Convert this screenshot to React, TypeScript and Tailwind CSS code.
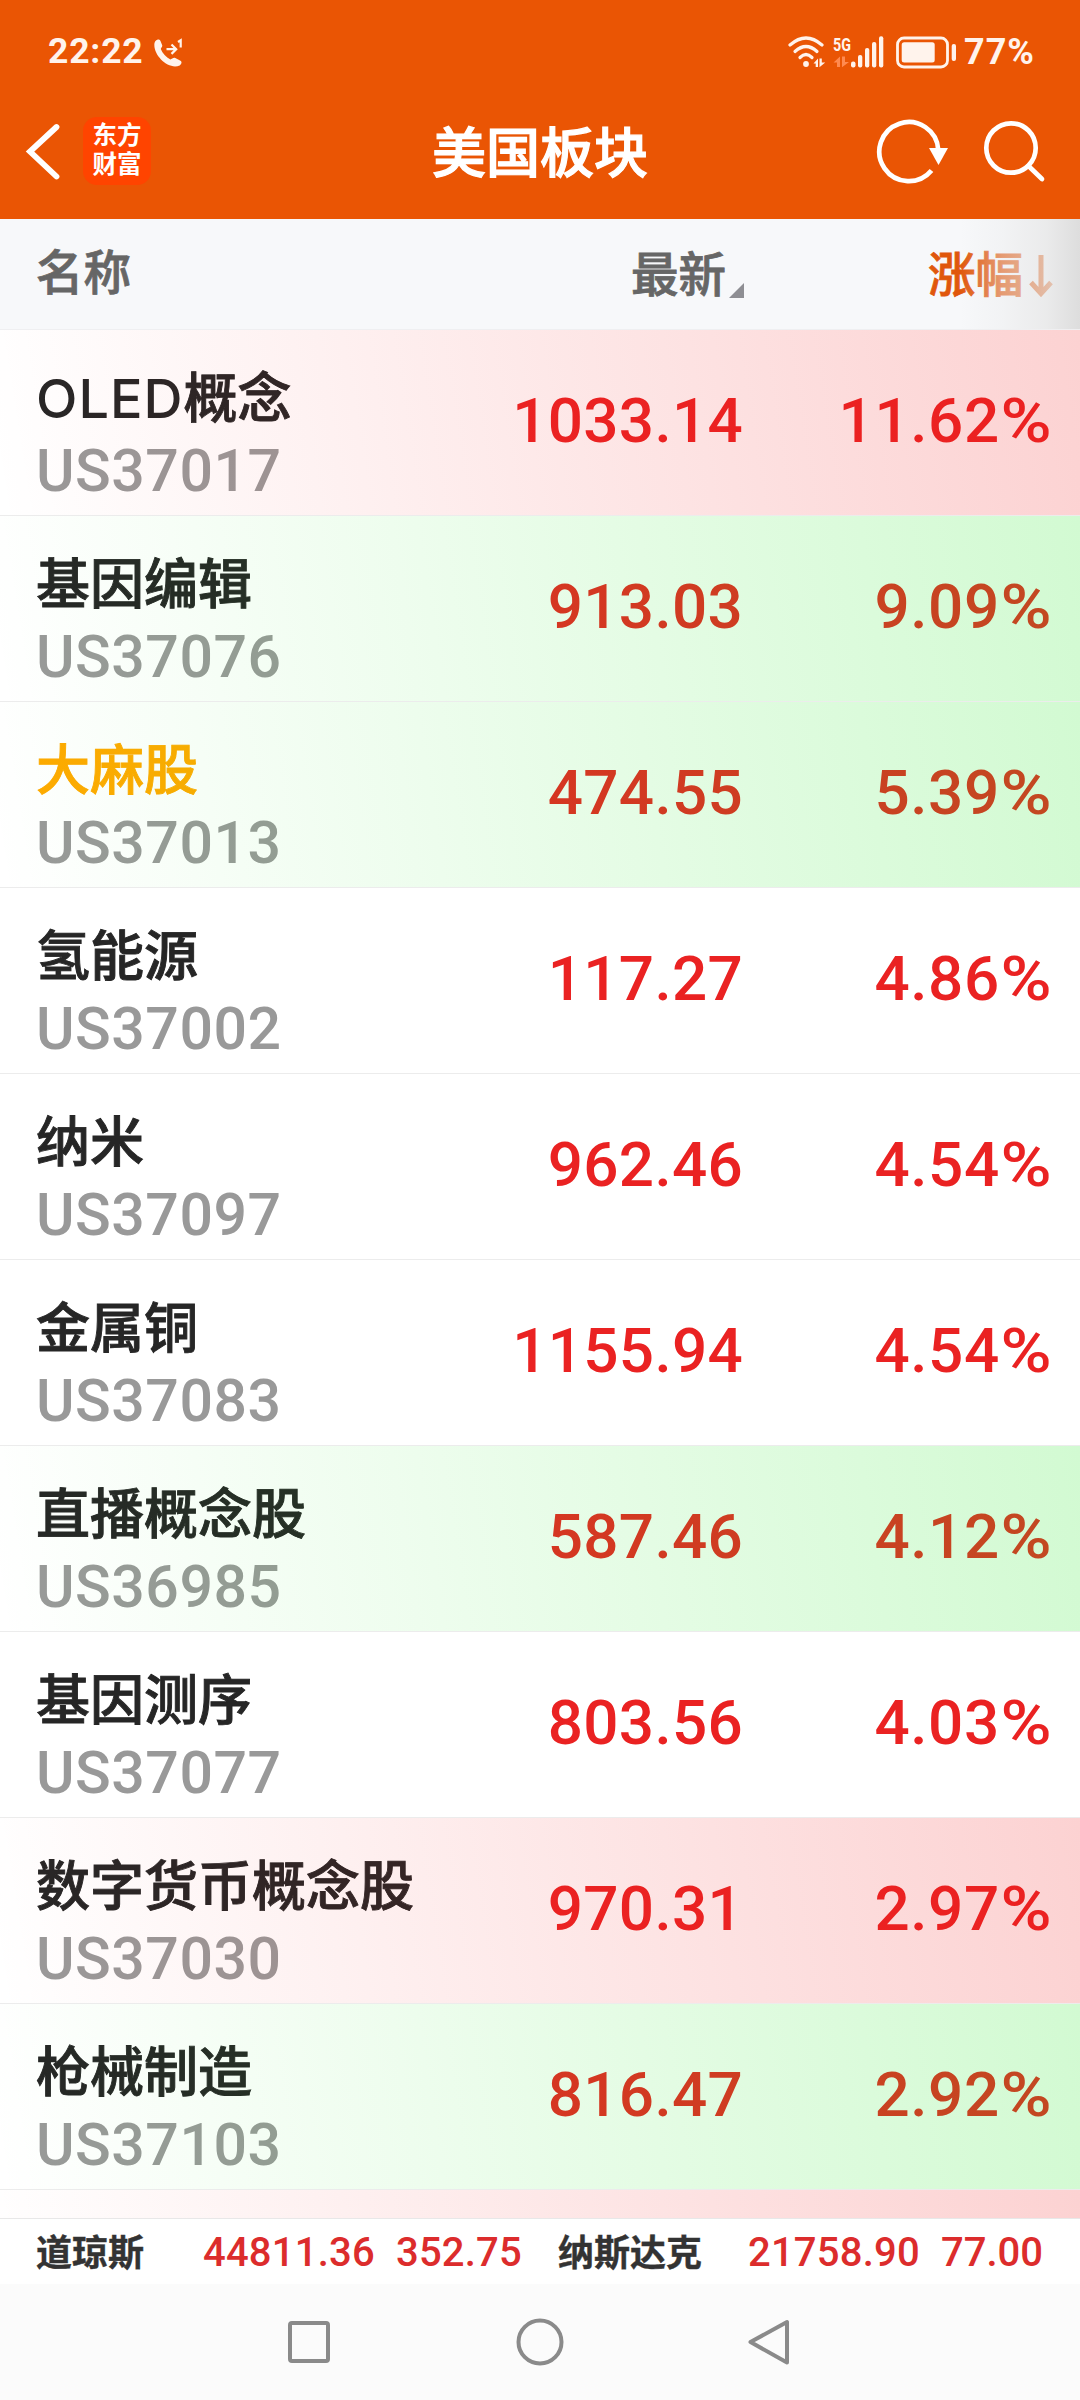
type Flash = 'up' | 'down';

interface Sector {
  latin?: string;
  name: string;
  code: string;
  price: string;
  change: string;
  flash?: Flash;
  starred?: boolean;
}

const SECTORS: Sector[] = [
  { latin: 'OLED', name: '概念', code: 'US37017', price: '1033.14', change: '11.62', flash: 'up' },
  { name: '基因编辑', code: 'US37076', price: '913.03', change: '9.09', flash: 'down' },
  { name: '大麻股', code: 'US37013', price: '474.55', change: '5.39', flash: 'down', starred: true },
  { name: '氢能源', code: 'US37002', price: '117.27', change: '4.86' },
  { name: '纳米', code: 'US37097', price: '962.46', change: '4.54' },
  { name: '金属铜', code: 'US37083', price: '1155.94', change: '4.54' },
  { name: '直播概念股', code: 'US36985', price: '587.46', change: '4.12', flash: 'down' },
  { name: '基因测序', code: 'US37077', price: '803.56', change: '4.03' },
  { name: '数字货币概念股', code: 'US37030', price: '970.31', change: '2.97', flash: 'up' },
  { name: '枪械制造', code: 'US37103', price: '816.47', change: '2.92', flash: 'down' },
];

// The tint sits over the text too, so the digits pick up some of its colour.
const FLASH_CLASS: Record<Flash, string> = {
  up: 'bg-[linear-gradient(81deg,rgba(240,30,30,0),rgba(240,30,30,0.2))]',
  down: 'bg-[linear-gradient(81deg,rgba(30,230,30,0),rgba(30,230,30,0.2))]',
};

function StatusBar() {
  return (
    <div className="flex h-[104px] items-center justify-between pl-[48px] pr-[42px] font-[Roboto] text-[#fff3ec]">
      <div className="flex items-center">
        <span className="w-[105px] text-[35.5px] font-bold leading-none tracking-[0.8px]">22:22</span>
        <svg width="32" height="32" viewBox="0 0 32 32" className="mt-[4px]">
          <path
            d="M1.500 5C2.500 1.500 6 .5 7.500 3l1.700 4.300c.4 1.500-.9 2.400-1.400 3.700 1.800 4.500 5.200 8.200 9.600 10.400 1.500-.4 3.200-2.300 4.900-1.300l5.200 2.600c1.800 1.200 1 3.600-.8 4.800C15.500 32.500-.5 17 1.500 5Z"
            fill="currentColor"
          />
          <path d="M13.500 11.200h9.500M18.500 6.500l4.700 4.700-4.700 4.700" fill="none" stroke="currentColor" strokeWidth="2.200" />
          <path d="M25 4l2.700-1.800v7.300" fill="none" stroke="currentColor" strokeWidth="2.200" />
        </svg>
      </div>
      <div className="flex items-center">
        <svg width="170" height="44" viewBox="788 30 170 44" className="mr-[6px]">
          <g fill="none" stroke="currentColor" strokeWidth="3.200" strokeLinecap="round">
            <path d="M790 45Q806 31 822 45" />
            <path d="M795 51.500Q806 41.500 817 51.500" />
            <path d="M800 57.500Q806 51.500 812 57.500" />
          </g>
          <circle cx="806" cy="64" r="2.900" fill="currentColor" />
          <path d="M813.500 63.500l4.500-5v8.500h-2.300v-3.500zM819.500 58.500h2.300v4h3.400l-5.700 4.800z" fill="currentColor" />
          <text
            x="833"
            y="50.500"
            fontSize="18.500"
            fontWeight="700"
            textLength="18"
            lengthAdjust="spacingAndGlyphs"
            fill="currentColor"
          >
            5G
          </text>
          <path d="M833.500 62.500l6.500-6v10.500h-3v-4.500zM842 56.500h3v5.500h4l-7 5.300z" fill="#ff8a50" />
          <g fill="currentColor">
            <rect x="851" y="61.500" width="4.500" height="6" rx="2" />
            <rect x="858" y="55" width="4.300" height="12.500" rx="2" />
            <rect x="865" y="48" width="4.300" height="19.500" rx="2" />
            <rect x="872" y="42" width="4.300" height="25.500" rx="2" />
            <rect x="879" y="36.300" width="4.300" height="31.200" rx="2" />
          </g>
          <rect x="897.500" y="38" width="50" height="29" rx="6.500" fill="none" stroke="currentColor" strokeWidth="2.800" />
          <rect x="901.700" y="42.300" width="33" height="20.200" rx="2.500" fill="currentColor" />
          <rect x="951.700" y="44" width="4.300" height="17" rx="2" fill="currentColor" />
        </svg>
        <span className="w-[74px] whitespace-nowrap text-[36px] font-bold leading-none tracking-[1px]">77%</span>
      </div>
    </div>
  );
}

function TitleBar() {
  return (
    <div className="flex h-[115px] items-start justify-between text-white">
      <div className="flex w-[360px] items-center pl-[24px] pt-[13px]">
        <svg width="40" height="68" viewBox="24 117 40 68">
          <path d="M56.500 127L30 151.500 56.500 176.500" fill="none" stroke="currentColor" strokeWidth="5.800" strokeLinecap="round" />
        </svg>
        <div className="ml-[19px] flex h-[68px] w-[68px] flex-col items-center justify-center rounded-[14px] bg-[#ff4400] pb-[2px] text-[24.5px] font-bold leading-[29px]">
          <span>东方</span>
          <span>财富</span>
        </div>
      </div>
      <h1 className="pt-[15px] text-[54px] font-medium leading-[70px] [-webkit-text-stroke:1.2px]">美国板块</h1>
      <div className="flex w-[360px] justify-end pr-[34px] pt-[11px]">
        <svg width="172" height="70" viewBox="874 115 172 70">
          <path
            d="M931.500 170.500A29.500 29.500 0 1 1 938.300 150"
            fill="none"
            stroke="currentColor"
            strokeWidth="4.700"
          />
          <path d="M929 148h19l-9.500 17z" fill="currentColor" />
          <circle cx="1011" cy="148" r="24.700" fill="none" stroke="currentColor" strokeWidth="4.700" />
          <path d="M1028.500 166L1042 179" stroke="currentColor" strokeWidth="4.700" strokeLinecap="round" />
        </svg>
      </div>
    </div>
  );
}

function TableHead() {
  return (
    <div className="relative flex h-[111px] items-center border-b border-[#efeff1] bg-[#f7f8fa] text-[47.5px] font-medium leading-[60px] text-[#666] [-webkit-text-stroke:0.8px]">
      <div className="w-[480px] pb-[3px] pl-[36px]">名称</div>
      <div className="flex w-[264px] items-center justify-end pt-[2px]">
        <span>最新</span>
        <svg width="15" height="15" viewBox="0 0 15 15" className="ml-[3px] mt-[31px]">
          <path d="M15 0v15H0z" fill="#8e8e93" />
        </svg>
      </div>
      <div className="flex flex-1 items-center justify-end pr-[27px] pt-[2px] text-[#e0570c]">
        <span>涨幅</span>
        <svg width="24" height="42" viewBox="0 0 24 42" className="ml-[6px] mt-[2px]">
          <path d="M12 0v38M2 27.500l10 11 10-11" fill="none" stroke="currentColor" strokeWidth="5" />
        </svg>
      </div>
      <div className="absolute inset-y-0 right-0 w-[120px] bg-[linear-gradient(90deg,rgba(240,241,242,0),rgba(236,237,238,0.45)_35%,rgba(229,229,229,0.7)_72%,rgb(221,221,221))]" />
    </div>
  );
}

function SectorRow({ sector }: { sector: Sector }) {
  return (
    <div className="relative flex h-[186px] border-b border-[#ececec] bg-white">
      <div className="flex w-[460px] flex-col pl-[36px] pt-[34px]">
        <span
          className={`whitespace-nowrap text-[54px] font-medium leading-[70px] [-webkit-text-stroke:0.9px] ${sector.starred ? 'text-[#ffaa00]' : 'text-[#262626]'}`}
        >
          {sector.latin && <span className="tracking-[1px] [-webkit-text-stroke:0px]">{sector.latin}</span>}
          {sector.name}
        </span>
        <span className="mt-[2px] font-[Roboto] text-[59px] font-medium leading-[70px] tracking-[0.5px] text-[#999]">
          {sector.code}
        </span>
      </div>
      <div className="w-[283px] pt-[56px] text-right font-[Roboto] text-[62px] font-medium leading-[70px] tracking-[0.3px] text-[#ea2222]">
        {sector.price}
      </div>
      <div className="flex-1 pr-[28px] pt-[56px] text-right font-[Roboto] text-[62px] font-medium leading-[70px] tracking-[0.6px] text-[#ea2222]">
        {sector.change}
        <span className="ml-[6px] inline-block origin-right scale-x-[1.12]">%</span>
      </div>
      {sector.flash && <div className={`absolute inset-0 ${FLASH_CLASS[sector.flash]}`} />}
    </div>
  );
}

function IndexBar() {
  return (
    <div className="flex h-[66px] items-center border-t border-[#e8e8e8] bg-white pt-[2px] text-[40px] font-medium leading-none text-[#dc2c2c]">
      <span className="w-[203px] pl-[36px] text-[36px] font-bold text-[#333] [-webkit-text-stroke:0.4px]">道琼斯</span>
      <span className="w-[193px] font-[Roboto] tracking-[0.2px]">44811.36</span>
      <span className="w-[162px] font-[Roboto] tracking-[0.2px]">352.75</span>
      <span className="w-[190px] text-[36px] font-bold text-[#333] [-webkit-text-stroke:0.4px]">纳斯达克</span>
      <span className="w-[193px] font-[Roboto] tracking-[0.2px]">21758.90</span>
      <span className="font-[Roboto]">77.00</span>
    </div>
  );
}

function NavBar() {
  return (
    <div className="flex h-[116px] justify-center bg-[#fbfbfb] pt-[33px]">
      <svg width="504" height="50" viewBox="288 2317 504 50" fill="none" stroke="#8a8a8a" strokeWidth="4" strokeLinejoin="round">
        <rect x="290" y="2323" width="38" height="38" rx="2" />
        <circle cx="540" cy="2342" r="21.500" />
        <path d="M787 2322v40.500L750.500 2342z" />
      </svg>
    </div>
  );
}

export default function App() {
  return (
    <div className="flex h-[2400px] w-[1080px] flex-col overflow-hidden bg-white font-[Inter,'Noto_Sans_CJK_SC',sans-serif]">
      <header className="bg-[#ea5504]">
        <StatusBar />
        <TitleBar />
      </header>
      <TableHead />
      <main className="flex-1 overflow-hidden">
        {SECTORS.map(s => (
          <SectorRow key={s.code} sector={s} />
        ))}
        <div className={`h-[186px] ${FLASH_CLASS.up}`} />
      </main>
      <IndexBar />
      <NavBar />
    </div>
  );
}
